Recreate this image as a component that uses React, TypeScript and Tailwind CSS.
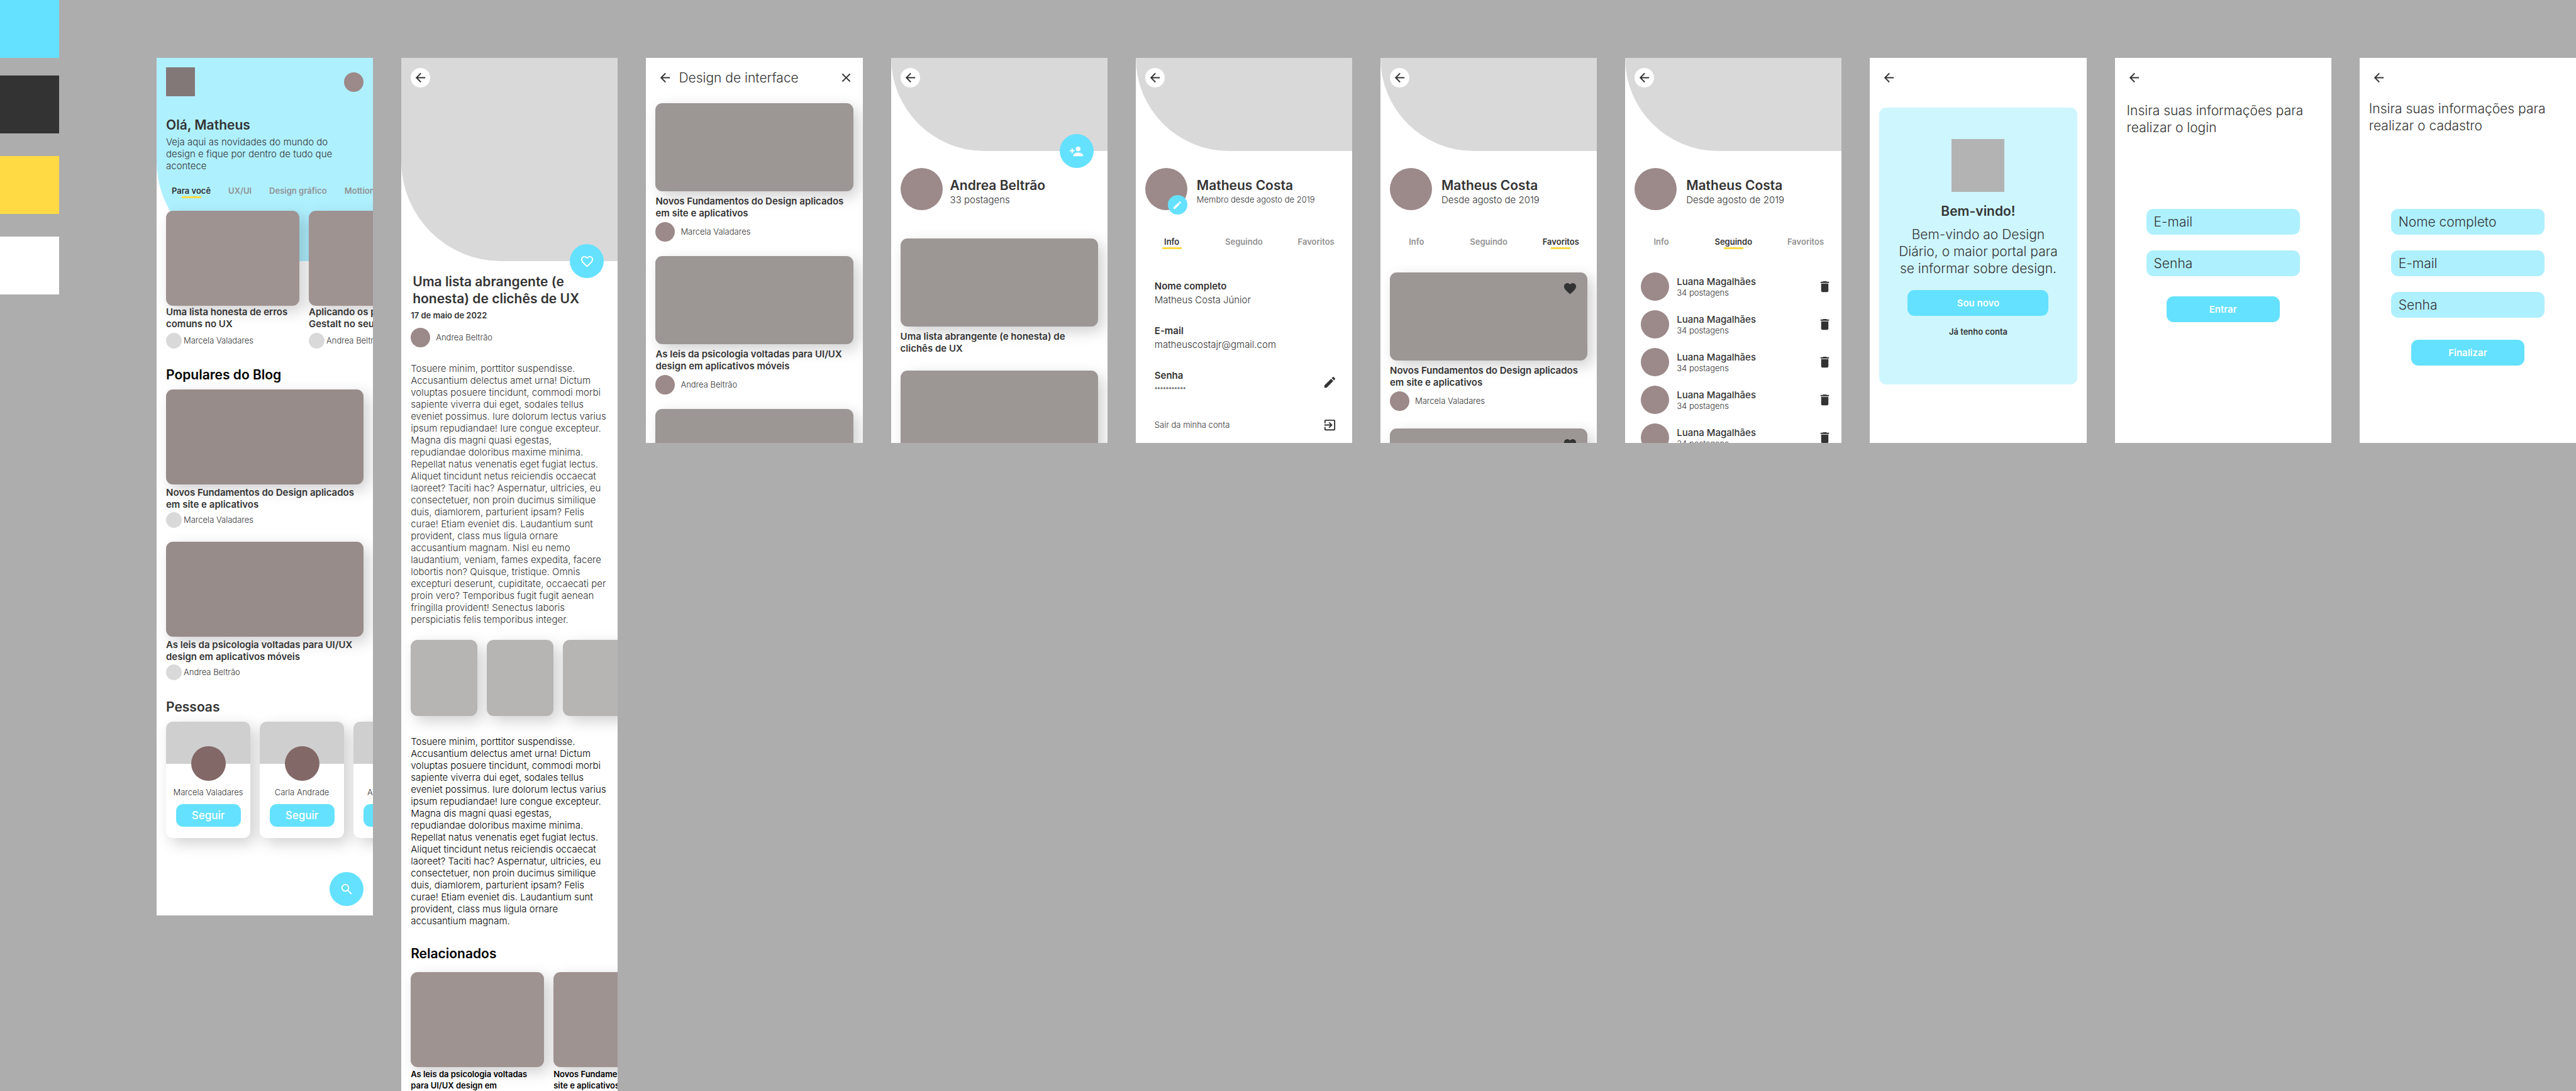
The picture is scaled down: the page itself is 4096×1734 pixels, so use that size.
import { useId } from "react";
import type { ReactNode } from "react";
import {
  MdArrowBack,
  MdClose,
  MdDelete,
  MdEdit,
  MdExitToApp,
  MdFavorite,
  MdFavoriteBorder,
  MdPersonAdd,
  MdSearch,
} from "react-icons/md";

const CARD_SHADOW = "shadow-[8px_8px_23px_rgba(0,0,0,0.19)]";

const BODY_START = [
  "Tosuere minim, porttitor suspendisse.",
  "Accusantium delectus amet urna! Dictum",
  "voluptas posuere tincidunt, commodi morbi",
  "sapiente viverra dui eget, sodales tellus",
  "eveniet possimus. Iure dolorum lectus varius",
  "ipsum repudiandae! Iure congue excepteur.",
  "Magna dis magni quasi egestas,",
  "repudiandae doloribus maxime minima.",
  "Repellat natus venenatis eget fugiat lectus.",
  "Aliquet tincidunt netus reiciendis occaecat",
  "laoreet? Taciti hac? Aspernatur, ultricies, eu",
  "consectetuer, non proin ducimus similique",
  "duis, diamlorem, parturient ipsam? Felis",
  "curae! Etiam eveniet dis. Laudantium sunt",
  "provident, class mus ligula ornare",
];

const BODY_LONG = [
  ...BODY_START,
  "accusantium magnam. Nisl eu nemo",
  "laudantium, veniam, fames expedita, facere",
  "lobortis non? Quisque, tristique. Omnis",
  "excepturi deserunt, cupiditate, occaecati per",
  "proin vero? Temporibus fugit fugit aenean",
  "fringilla provident! Senectus laboris",
  "perspiciatis felis temporibus integer.",
];

const BODY_SHORT = [...BODY_START, "accusantium magnam."];

function Lines({ lines }: { lines: string[] }) {
  return (
    <>
      {lines.map((line) => (
        <span key={line} className="block whitespace-nowrap">
          {line}
        </span>
      ))}
    </>
  );
}

function Screen({ children, className = "h-[612px]" }: { children: ReactNode; className?: string }) {
  return (
    <section className={`relative min-w-0 overflow-hidden bg-white ${className}`}>{children}</section>
  );
}

function BackButton({ className = "bg-white" }: { className?: string }) {
  return (
    <button
      type="button"
      aria-label="Voltar"
      className={`flex size-[31px] shrink-0 items-center justify-center rounded-full ${className}`}
    >
      <MdArrowBack className="size-[23px]" />
    </button>
  );
}

function RoundAction({ label, children }: { label: string; children: ReactNode }) {
  return (
    <button
      type="button"
      aria-label={label}
      className="flex size-[54px] items-center justify-center rounded-full bg-[#64e1ff] text-white"
    >
      {children}
    </button>
  );
}

function Cover({ height, action }: { height: string; action?: ReactNode }) {
  return (
    <header className={`relative rounded-bl-[159px] bg-[#d9d9d9] px-[15px] pt-4 ${height}`}>
      <BackButton />
      {action && <div className="absolute right-[22px] -bottom-[27px]">{action}</div>}
    </header>
  );
}

function Author({ name, variant }: { name: string; variant: "small" | "large" }) {
  return variant === "small" ? (
    <div className="flex items-center gap-[3px] text-[13px] leading-[17px] font-light whitespace-nowrap">
      <span className="size-[25px] shrink-0 rounded-full bg-[#d9d9d9]" />
      {name}
    </div>
  ) : (
    <div className="flex items-center gap-[9px] text-[13px] leading-[17px] font-light whitespace-nowrap">
      <span className="size-[31px] shrink-0 rounded-full bg-[#9c8989]" />
      {name}
    </div>
  );
}

function TopicTab({ label, active = false }: { label: string; active?: boolean }) {
  return (
    <button
      type="button"
      role="tab"
      aria-selected={active}
      className={`flex shrink-0 flex-col items-center text-[13px] leading-[17px] font-semibold ${
        active ? "text-[#333333]" : "text-[#929292]"
      }`}
    >
      {label}
      <span className={`h-[3px] w-[31px] ${active ? "bg-[#ffda44]" : "bg-transparent"}`} />
    </button>
  );
}

function SmallCard({ lines, author }: { lines: string[]; author: string }) {
  return (
    <article className="w-[212px] shrink-0">
      <div className={`h-[151px] rounded-[11px] bg-[#9f9392] ${CARD_SHADOW}`} />
      <h3 className="relative text-[15px] leading-[19px] font-semibold">
        <Lines lines={lines} />
      </h3>
      <div className="mt-[5px]">
        <Author name={author} variant="small" />
      </div>
    </article>
  );
}

function PopularCard({ lines, author }: { lines: string[]; author: string }) {
  return (
    <article>
      <div className={`h-[151px] rounded-[11px] bg-[#978c8a] ${CARD_SHADOW}`} />
      <h3 className="relative mt-[3px] text-[15px] leading-[19px] font-semibold">
        <Lines lines={lines} />
      </h3>
      <div className="mt-[3px]">
        <Author name={author} variant="small" />
      </div>
    </article>
  );
}

function PostCard({ lines, author, liked = false }: { lines: string[]; author?: string; liked?: boolean }) {
  return (
    <article>
      <div className={`relative h-[140px] rounded-[11px] bg-[#9c9695] ${CARD_SHADOW}`}>
        {liked && (
          <button type="button" aria-label="Remover dos favoritos" className="absolute top-[14px] right-4">
            <MdFavorite className="size-[23px]" />
          </button>
        )}
      </div>
      <h3 className="relative mt-1.5 text-[15px] leading-[19px] font-semibold">
        <Lines lines={lines} />
      </h3>
      {author && (
        <div className="mt-[5px]">
          <Author name={author} variant="large" />
        </div>
      )}
    </article>
  );
}

function PersonCard({ name }: { name: string }) {
  return (
    <article className={`flex h-[185px] w-[134px] shrink-0 flex-col items-center rounded-[11px] bg-white ${CARD_SHADOW}`}>
      <div className="flex h-[67px] w-full justify-center rounded-t-[11px] bg-[#cfcfcf] pt-[39px]">
        <span className="size-[55px] shrink-0 rounded-full bg-[#826867]" />
      </div>
      <p className="mt-[37px] text-[13px] leading-[17px] font-light whitespace-nowrap">{name}</p>
      <button
        type="button"
        className="mt-2.5 h-9 w-[103px] rounded-[11px] bg-[#64e1ff] text-[17px] leading-[21px] font-medium text-white"
      >
        Seguir
      </button>
    </article>
  );
}

function HomeScreen() {
  return (
    <Screen className="h-[1363px]">
      <div className="h-[323px] rounded-bl-[159px] bg-[#aff0ff] pl-[15px]">
        <div className="flex items-center justify-between pt-[15px] pr-[15px]">
          <span className="size-[46px] bg-[#837878]" />
          <span className="size-[31px] rounded-full bg-[#9c8989]" />
        </div>
        <h1 className="mt-[31px] text-[21px] leading-[29px] font-semibold">Olá, Matheus</h1>
        <p className="mt-[3px] text-[15px] leading-[19px] font-light">
          <Lines
            lines={["Veja aqui as novidades do mundo do", "design e fique por dentro de tudo que", "acontece"]}
          />
        </p>
        <div role="tablist" className="mt-[22px] flex gap-7 overflow-hidden pl-[9px] whitespace-nowrap">
          <TopicTab label="Para você" active />
          <TopicTab label="UX/UI" />
          <TopicTab label="Design gráfico" />
          <TopicTab label="Mottion" />
        </div>
        <div className="mt-5 flex gap-[15px]">
          <SmallCard lines={["Uma lista honesta de erros", "comuns no UX"]} author="Marcela Valadares" />
          <SmallCard lines={["Aplicando os p", "Gestalt no seu"]} author="Andrea Beltrão" />
        </div>
      </div>
      <div className="px-[15px] pt-[166px]">
        <h2 className="text-[21px] leading-[29px] font-semibold text-black">Populares do Blog</h2>
        <div className="mt-[9px] flex flex-col gap-[22px]">
          <PopularCard
            lines={["Novos Fundamentos do Design aplicados", "em site e aplicativos"]}
            author="Marcela Valadares"
          />
          <PopularCard
            lines={["As leis da psicologia voltadas para UI/UX", "design em aplicativos móveis"]}
            author="Andrea Beltrão"
          />
        </div>
        <h2 className="mt-7 text-[21px] leading-[29px] font-semibold">Pessoas</h2>
        <div className="mt-[9px] flex gap-[15px]">
          <PersonCard name="Marcela Valadares" />
          <PersonCard name="Carla Andrade" />
          <PersonCard name="Andrea Beltrão" />
        </div>
        <div className="mt-[54px] flex justify-end">
          <RoundAction label="Buscar">
            <MdSearch className="size-[23px]" />
          </RoundAction>
        </div>
      </div>
    </Screen>
  );
}

function ArticleScreen() {
  return (
    <Screen className="h-[1800px]">
      <Cover
        height="h-[323px]"
        action={
          <RoundAction label="Curtir">
            <MdFavoriteBorder className="size-[23px]" />
          </RoundAction>
        }
      />
      <div className="px-[15px] pt-[19px]">
        <h1 className="pl-[3px] text-[21px] leading-[27px] font-semibold">
          <Lines lines={["Uma lista abrangente (e", "honesta) de clichês de UX"]} />
        </h1>
        <p className="mt-[5px] text-[13px] leading-[17px] font-semibold">17 de maio de 2022</p>
        <div className="mt-[11px]">
          <Author name="Andrea Beltrão" variant="large" />
        </div>
        <p className="mt-6 text-[15px] leading-[19px] font-light">
          <Lines lines={BODY_LONG} />
        </p>
        <div className="mt-[23px] flex gap-[15px]">
          <span className={`h-[121px] w-[106px] shrink-0 rounded-[11px] bg-[#b7b4b4] ${CARD_SHADOW}`} />
          <span className={`h-[121px] w-[106px] shrink-0 rounded-[11px] bg-[#b7b4b4] ${CARD_SHADOW}`} />
          <span className={`h-[121px] w-[106px] shrink-0 rounded-[11px] bg-[#b7b4b4] ${CARD_SHADOW}`} />
        </div>
        <p className="mt-[31px] text-[15px] leading-[19px] font-light text-black">
          <Lines lines={BODY_SHORT} />
        </p>
        <h2 className="mt-7 text-[21px] leading-[29px] font-semibold text-black">Relacionados</h2>
        <div className="mt-[15px] flex gap-[15px] text-[13px] leading-[18px] font-semibold text-black">
          <article className="w-[212px] shrink-0">
            <div className={`h-[151px] rounded-[11px] bg-[#9f9392] ${CARD_SHADOW}`} />
            <h3 className="relative mt-0.5">
              <Lines lines={["As leis da psicologia voltadas", "para UI/UX design em"]} />
            </h3>
          </article>
          <article className="w-[212px] shrink-0">
            <div className={`h-[151px] rounded-[11px] bg-[#9f9392] ${CARD_SHADOW}`} />
            <h3 className="relative mt-0.5">
              <Lines lines={["Novos Fundamentos", "site e aplicativos"]} />
            </h3>
          </article>
        </div>
      </div>
    </Screen>
  );
}

function TopicScreen() {
  return (
    <Screen>
      <header className="flex items-center px-[15px] pt-4">
        <BackButton />
        <h1 className="ml-1.5 flex-1 text-[21px] leading-[29px] font-light">Design de interface</h1>
        <button type="button" aria-label="Fechar">
          <MdClose className="size-[23px]" />
        </button>
      </header>
      <div className="mt-[25px] flex flex-col gap-[23px] px-[15px]">
        <PostCard
          lines={["Novos Fundamentos do Design aplicados", "em site e aplicativos"]}
          author="Marcela Valadares"
        />
        <PostCard
          lines={["As leis da psicologia voltadas para UI/UX", "design em aplicativos móveis"]}
          author="Andrea Beltrão"
        />
        <PostCard lines={[]} />
      </div>
    </Screen>
  );
}

function AuthorScreen() {
  return (
    <Screen>
      <Cover
        height="h-[148px]"
        action={
          <RoundAction label="Seguir autora">
            <MdPersonAdd className="size-[23px]" />
          </RoundAction>
        }
      />
      <div className="mt-[27px] flex items-center gap-3 px-[15px]">
        <span className="size-[67px] shrink-0 rounded-full bg-[#9c8989]" />
        <div className="pt-1.5">
          <h1 className="text-[21px] leading-[27px] font-semibold">Andrea Beltrão</h1>
          <p className="text-[15px] leading-[19px] font-light">33 postagens</p>
        </div>
      </div>
      <div className="mt-[45px] flex flex-col gap-[26px] px-[15px]">
        <PostCard lines={["Uma lista abrangente (e honesta) de", "clichês de UX"]} />
        <PostCard lines={[]} />
      </div>
    </Screen>
  );
}

type ProfileTab = "Info" | "Seguindo" | "Favoritos";
const PROFILE_TABS: ProfileTab[] = ["Info", "Seguindo", "Favoritos"];

function ProfileTop({ tab }: { tab: ProfileTab }) {
  const editable = tab === "Info";
  return (
    <>
      <Cover height="h-[148px]" />
      <div className="mt-[27px] flex items-center gap-[15px] px-[15px]">
        <div className="relative size-[67px] shrink-0 rounded-full bg-[#9c8989]">
          {editable && (
            <button
              type="button"
              aria-label="Editar foto"
              className="absolute right-0 -bottom-[7px] flex size-[31px] items-center justify-center rounded-full bg-[#64e1ff] text-white"
            >
              <MdEdit className="size-4" />
            </button>
          )}
        </div>
        <div className="pt-1.5">
          <h1 className="text-[21px] leading-[27px] font-semibold">Matheus Costa</h1>
          {editable ? (
            <p className="text-[13px] leading-[19px] font-light">Membro desde agosto de 2019</p>
          ) : (
            <p className="text-[15px] leading-[19px] font-light">Desde agosto de 2019</p>
          )}
        </div>
      </div>
      <div role="tablist" className="mt-[42px] grid grid-cols-3 justify-items-center">
        {PROFILE_TABS.map((label) => (
          <TopicTab key={label} label={label} active={label === tab} />
        ))}
      </div>
    </>
  );
}

function InfoScreen() {
  return (
    <Screen>
      <ProfileTop tab="Info" />
      <dl className="mt-[49px] flex flex-col gap-[30px] pr-6 pl-[30px] text-[15px] leading-[19px]">
        <div>
          <dt className="font-semibold">Nome completo</dt>
          <dd className="mt-[3px] font-light">Matheus Costa Júnior</dd>
        </div>
        <div>
          <dt className="font-semibold">E-mail</dt>
          <dd className="mt-[3px] font-light">matheuscostajr@gmail.com</dd>
        </div>
        <div className="flex items-center justify-between">
          <div>
            <dt className="font-semibold">Senha</dt>
            <dd className="mt-[3px] text-[9px] leading-[19px]">***********</dd>
          </div>
          <button type="button" aria-label="Editar senha">
            <MdEdit className="size-[23px]" />
          </button>
        </div>
      </dl>
      <button
        type="button"
        className="mt-9 flex w-full items-center justify-between pr-6 pl-[30px] text-[13px] leading-[17px] font-light"
      >
        Sair da minha conta
        <MdExitToApp className="size-[23px]" />
      </button>
    </Screen>
  );
}

function FavoritesScreen() {
  return (
    <Screen>
      <ProfileTop tab="Favoritos" />
      <div className="mt-[37px] flex flex-col gap-7 px-[15px]">
        <PostCard
          liked
          lines={["Novos Fundamentos do Design aplicados", "em site e aplicativos"]}
          author="Marcela Valadares"
        />
        <PostCard liked lines={[]} />
      </div>
    </Screen>
  );
}

function FollowingScreen() {
  return (
    <Screen>
      <ProfileTop tab="Seguindo" />
      <ul className="mt-[37px] flex flex-col gap-[15px] pr-[15px] pl-[25px]">
        {[1, 2, 3, 4, 5].map((row) => (
          <li key={row} className="flex items-center">
            <span className="size-[45px] shrink-0 rounded-full bg-[#9c8989]" />
            <div className="ml-3 flex-1">
              <p className="text-[15px] leading-[19px] font-medium">Luana Magalhães</p>
              <p className="text-[13px] leading-[17px] font-light">34 postagens</p>
            </div>
            <button type="button" aria-label="Deixar de seguir">
              <MdDelete className="size-[23px]" />
            </button>
          </li>
        ))}
      </ul>
    </Screen>
  );
}

function WelcomeScreen() {
  return (
    <Screen>
      <header className="px-[15px] pt-4">
        <BackButton />
      </header>
      <div className="mx-[15px] mt-8 flex h-[440px] flex-col items-center rounded-[11px] bg-[#cef6ff] pt-[50px] text-center">
        <span className="size-[84px] bg-[#b3b3b3]" />
        <h1 className="mt-4 text-[21px] leading-[29px] font-semibold">Bem-vindo!</h1>
        <p className="mt-[9px] text-[21px] leading-[27px] font-light">
          <Lines lines={["Bem-vindo ao Design", "Diário, o maior portal para", "se informar sobre design."]} />
        </p>
        <button
          type="button"
          className="mt-[21px] h-[41px] w-[224px] rounded-[11px] bg-[#64e1ff] text-[15px] leading-[19px] font-semibold text-white"
        >
          Sou novo
        </button>
        <a href="#login" className="mt-[17px] text-[13px] leading-[17px] font-semibold">
          Já tenho conta
        </a>
      </div>
    </Screen>
  );
}

function Field({ label, type }: { label: string; type: string }) {
  const id = useId();
  return (
    <div>
      <label htmlFor={id} className="sr-only">
        {label}
      </label>
      <input
        id={id}
        type={type}
        placeholder={label}
        className="block h-[41px] w-full rounded-[11px] bg-[#aff0ff] px-3 text-[21px] leading-[27px] font-light text-[#333333] outline-none placeholder:text-[#333333]"
      />
    </div>
  );
}

function LoginScreen() {
  return (
    <Screen>
      <header className="px-[15px] pt-4">
        <BackButton />
      </header>
      <h1 className="mt-[23px] px-[19px] text-[21px] leading-[27px] font-light">
        <Lines lines={["Insira suas informações para", "realizar o login"]} />
      </h1>
      <form className="mx-[50px] mt-[116px] flex flex-col gap-[25px]">
        <Field label="E-mail" type="email" />
        <Field label="Senha" type="password" />
        <button
          type="button"
          className="mt-[7px] h-[41px] w-[180px] self-center rounded-[11px] bg-[#64e1ff] text-[15px] leading-[19px] font-semibold text-white"
        >
          Entrar
        </button>
      </form>
    </Screen>
  );
}

function SignUpScreen() {
  return (
    <Screen>
      <header className="px-[15px] pt-4">
        <BackButton />
      </header>
      <h1 className="mt-5 px-[15px] text-[21px] leading-[27px] font-light">
        <Lines lines={["Insira suas informações para", "realizar o cadastro"]} />
      </h1>
      <form className="mx-[50px] mt-[119px] flex flex-col gap-[25px]">
        <Field label="Nome completo" type="text" />
        <Field label="E-mail" type="email" />
        <Field label="Senha" type="password" />
        <button
          type="button"
          className="mt-2.5 h-[41px] w-[180px] self-center rounded-[11px] bg-[#64e1ff] text-[15px] leading-[19px] font-semibold text-white"
        >
          Finalizar
        </button>
      </form>
    </Screen>
  );
}

export default function App() {
  return (
    <main className="flex h-screen items-start overflow-hidden bg-[#adadad] font-['Inter',sans-serif] text-[#333333]">
      <aside aria-label="Paleta de cores" className="flex w-[94px] shrink-0 flex-col">
        <span className="h-[92px] bg-[#64e1ff]" />
        <span className="mt-7 h-[92px] bg-[#333333]" />
        <span className="mt-9 h-[92px] bg-[#ffda44]" />
        <span className="mt-9 h-[92px] bg-white" />
      </aside>
      <div className="ml-[155px] grid min-w-0 flex-1 grid-cols-10 items-start gap-[45px] pt-[92px]">
        <HomeScreen />
        <ArticleScreen />
        <TopicScreen />
        <AuthorScreen />
        <InfoScreen />
        <FavoritesScreen />
        <FollowingScreen />
        <WelcomeScreen />
        <LoginScreen />
        <SignUpScreen />
      </div>
    </main>
  );
}
